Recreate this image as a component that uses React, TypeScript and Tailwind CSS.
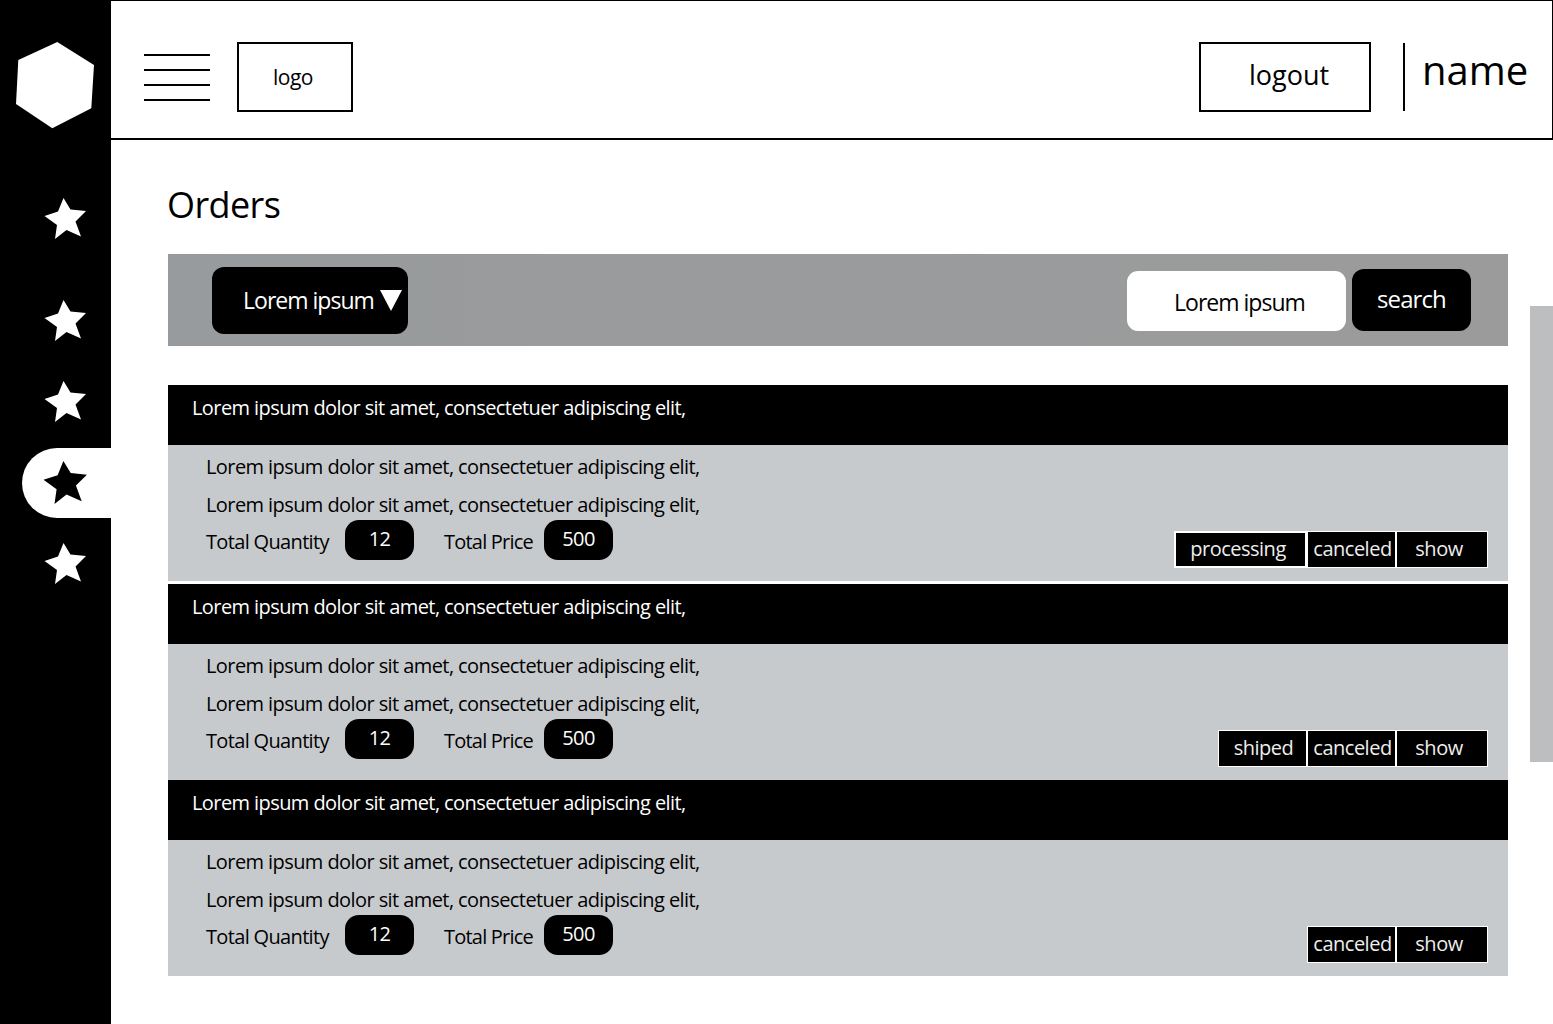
import React from 'react';

const font = { fontFamily: '"Open Sans", sans-serif' };

const Star: React.FC<{ className?: string }> = ({ className }) => (
  <svg viewBox="0 0 44 44" className={className}>
    <polygon
      points="19.5,1 26.5,12.5 42,14 31.5,24.5 37,39.5 22.5,33 11,42 13,28 0.5,19 14,14.5"
      fill="currentColor"
    />
  </svg>
);

const Pill: React.FC<{ value: string }> = ({ value }) => (
  <div className="flex h-[40px] w-[69px] items-center justify-center rounded-[14px] bg-black pb-[2px] text-[20px] tracking-[-0.6px] text-white">
    {value}
  </div>
);

type Action = { label: string; width: string; inset: string; strong?: boolean };

const ActionButton: React.FC<Action> = ({ label, width, inset, strong }) => (
  <div
    className={`flex h-[37px] items-center justify-center border-white bg-black pb-[1px] text-[20px] tracking-[-0.5px] text-[#eeeeee] ${width} ${inset} ${strong ? 'border-2' : 'border'}`}
  >
    {label}
  </div>
);

const lorem = 'Lorem ipsum dolor sit amet, consectetuer adipiscing elit,';

const OrderRow: React.FC<{ actions: Action[]; className?: string }> = ({ actions, className }) => (
  <div className={className}>
    <div className="h-[60px] bg-black pl-[24px] pt-[6px] text-[20px] leading-[34px] tracking-[-0.58px] text-white">{lorem}</div>
    <div className="flex h-[136px] justify-between bg-[#c7cacd] pl-[38px] pr-[20px] text-black">
      <div className="pt-[3px] text-[20px]">
        <div className="h-[38px] leading-[38px] tracking-[-0.58px]">{lorem}</div>
        <div className="h-[38px] leading-[38px] tracking-[-0.58px]">{lorem}</div>
        <div className="-mt-[4px] flex items-center tracking-[-0.66px]">
          <span className="w-[139px] pt-[3px]">Total Quantity</span>
          <Pill value="12" />
          <span className="ml-[30px] w-[100px] pt-[3px] tracking-[-0.78px]">Total Price</span>
          <Pill value="500" />
        </div>
      </div>
      <div className="mb-[13px] flex self-end">
        {actions.map(a => (
          <ActionButton key={a.label} {...a} />
        ))}
      </div>
    </div>
  </div>
);

const App: React.FC = () => {
  const canceled: Action = { label: 'canceled', width: 'w-[89px]', inset: 'pl-[2px]' };
  const show: Action = { label: 'show', width: 'w-[92px]', inset: 'pr-[6px]' };

  return (
    <div className="relative flex h-[1024px] w-[1553px] overflow-hidden bg-white" style={font}>
      {/* sidebar */}
      <aside className="flex w-[111px] shrink-0 flex-col bg-black pt-[41px] text-white">
        <svg viewBox="0 0 80 90" className="ml-[15px] h-[90px] w-[80px]">
          <polygon points="42.3,1 79,24 76.3,67.3 37.3,87.3 1,63 3.3,19" fill="currentColor" />
        </svg>
        <Star className="ml-[44px] mt-[66px] h-[44px] w-[44px]" />
        <Star className="ml-[44px] mt-[58px] h-[44px] w-[44px]" />
        <Star className="ml-[44px] mt-[37px] h-[44px] w-[44px]" />
        <div className="ml-[22px] mt-[24px] flex h-[70px] items-center rounded-l-[35px] bg-white pl-[21px] text-black">
          <Star className="h-[46px] w-[46px]" />
        </div>
        <Star className="ml-[44px] mt-[24px] h-[44px] w-[44px]" />
      </aside>

      <div className="flex-1">
        {/* header */}
        <header className="flex h-[140px] items-center border-b-2 border-r border-t border-black pl-[33px] pr-[23px] pt-[15px]">
          <div className="flex w-[66px] flex-col gap-[13px] pt-[1px]">
            <div className="h-[2px] bg-black" />
            <div className="h-[2px] bg-black" />
            <div className="h-[2px] bg-black" />
            <div className="h-[2px] bg-black" />
          </div>
          <div className="ml-[27px] flex h-[70px] w-[116px] items-center justify-center border-2 border-black pr-[4px] pt-[1px] text-[21px] tracking-[-0.5px] text-black">
            logo
          </div>
          <div className="ml-auto flex h-[70px] w-[172px] items-center justify-center border-2 border-black pb-[4px] pl-[8px] text-[27px]">
            logout
          </div>
          <div className="ml-[32px] h-[68px] w-[2px] bg-black" />
          <div className="ml-[17px] w-[107px] pb-[15px] text-[40px] leading-[56px]">name</div>
        </header>

        <main className="pl-[57px] pr-[45px]">
          <h1 className="-ml-[1px] pb-[24px] pt-[40px] text-[36px] leading-[50px] tracking-[-0.6px] text-black">Orders</h1>

          {/* filter bar */}
          <div className="flex h-[92px] items-center justify-between bg-gradient-to-r from-[#989b9d] to-[#9b9b9b] pl-[44px] pr-[37px]">
            <div className="flex h-[67px] w-[196px] items-center rounded-[12px] bg-black pl-[31px] text-[23px] tracking-[-0.98px] text-white">
              Lorem ipsum
              <svg viewBox="0 0 22 21" className="ml-[6px] h-[21px] w-[22px]">
                <polygon points="0,0 22,0 11,21" fill="currentColor" />
              </svg>
            </div>
            <div className="flex items-start gap-[6px]">
              <div className="mt-[2px] flex h-[60px] w-[219px] items-center rounded-[11px] bg-white pl-[47px] pt-[3px] text-[23px] tracking-[-0.98px] text-black">
                Lorem ipsum
              </div>
              <div className="flex h-[62px] w-[119px] items-center justify-center rounded-[12px] bg-black pb-[3px] text-[24px] tracking-[-0.9px] text-white">
                search
              </div>
            </div>
          </div>

          {/* orders */}
          <OrderRow
            className="mt-[39px]"
            actions={[{ label: 'processing', width: 'w-[133px]', inset: 'pr-[5px]', strong: true }, canceled, show]}
          />
          <OrderRow
            className="mt-[3px]"
            actions={[{ label: 'shiped', width: 'w-[89px]', inset: 'pl-[2px]' }, canceled, show]}
          />
          <OrderRow actions={[canceled, show]} />
        </main>
      </div>

      {/* scrollbar */}
      <div className="absolute left-[1530px] top-[306px] h-[456px] w-[23px] bg-[#bcbec0]" />
    </div>
  );
};

export default App;
